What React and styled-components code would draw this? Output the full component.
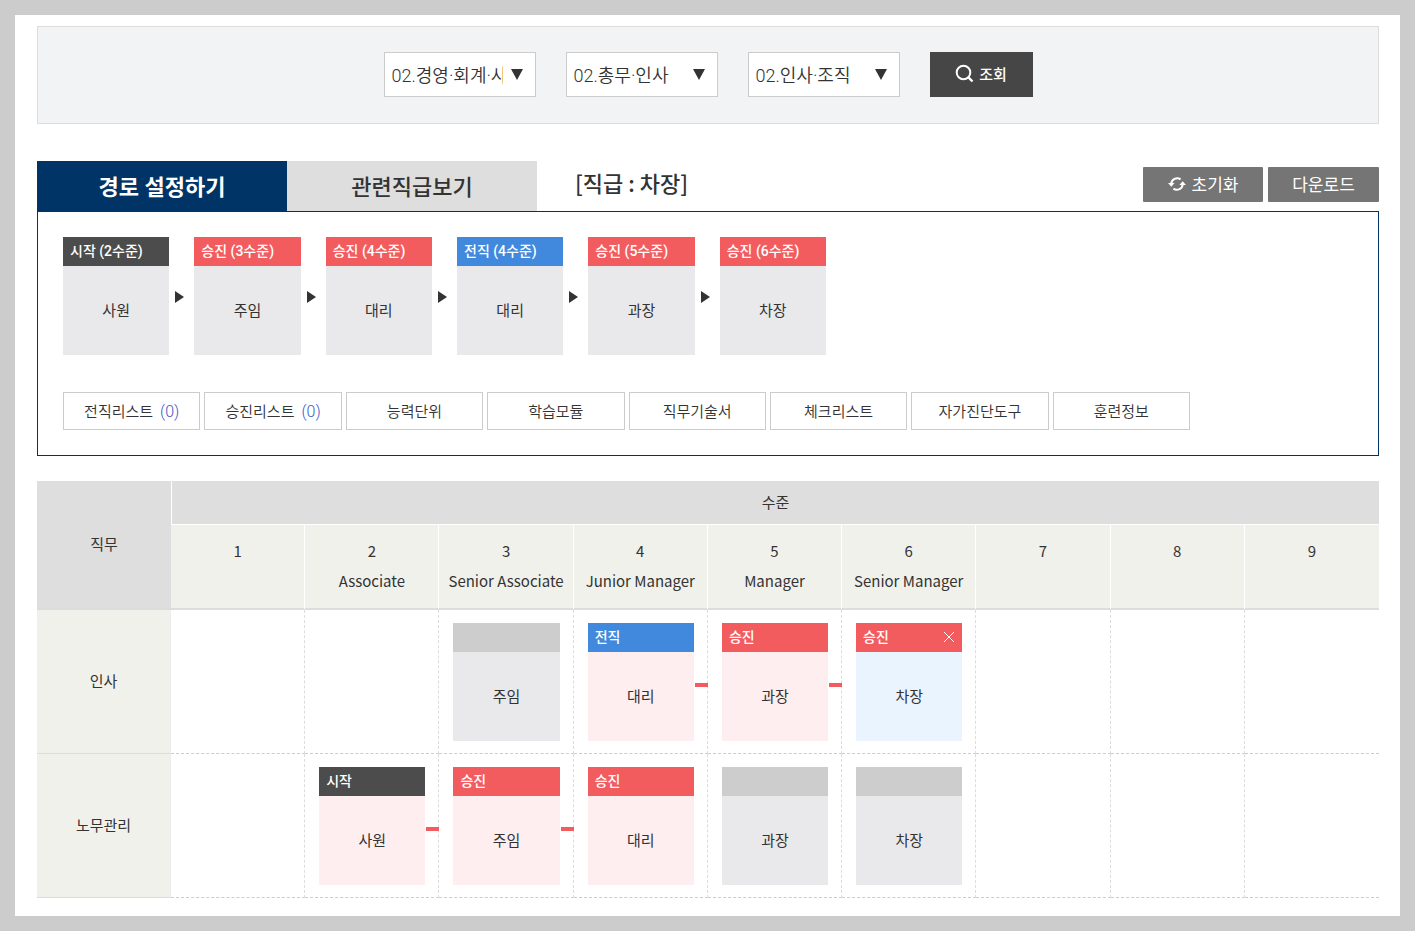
import React, { useState } from 'react';
import styled, { createGlobalStyle } from 'styled-components';

const GlobalStyle = createGlobalStyle`
  * {
    box-sizing: border-box;
  }

  body {
    margin: 0;
    background: #ccc;
    color: #333;
    font-family: Roboto, 'Noto Sans CJK KR', sans-serif;
    font-size: 15px;
  }

  button,
  select {
    font-family: inherit;
    color: inherit;
  }
`;

const kinds = {
  start: '#4c4c4c',
  promote: '#f35c5f',
  transfer: '#4189dd',
  none: '#cdcdcd',
};

const states = {
  idle: '#e9e9eb',
  path: '#ffeeef',
  current: '#e9f4ff',
};

const Sheet = styled.main`
  margin: 15px;
  padding: 11px 21px 18px 22px;
  background: #fff;
`;

const SearchBar = styled.form`
  display: flex;
  justify-content: center;
  align-items: center;
  gap: 30px;
  padding: 25px 0 26px;
  border: 1px solid #ddd;
  background: #f1f3f5;
`;

const SelectBox = styled.div`
  position: relative;
  width: 152px;

  &::after {
    content: '';
    position: absolute;
    top: 17px;
    right: 13px;
    border: 6px solid transparent;
    border-top: 11px solid #333;
    border-bottom: 0;
    pointer-events: none;
  }
`;

const Select = styled.select`
  display: block;
  width: 100%;
  height: 45px;
  padding: 2px 32px 0 7px;
  border: 1px solid #ccc;
  border-radius: 0;
  background: #fff;
  font-size: 18px;
  font-weight: 350;
  appearance: none;
`;

const SearchButton = styled.button`
  display: flex;
  justify-content: center;
  align-items: center;
  gap: 5px;
  width: 103px;
  height: 45px;
  padding: 0 0 2px;
  border: 0;
  background: #464646;
  color: #fff;
  font-size: 15px;
  font-weight: 500;
  cursor: pointer;
`;

const TabBar = styled.div`
  display: flex;
  align-items: center;
  margin-top: 37px;
`;

const Tab = styled.button`
  width: 250px;
  height: 50px;
  padding: 0 0 2px;
  border: 0;
  background: ${props => (props.$active ? '#003366' : '#dedede')};
  color: ${props => (props.$active ? '#fff' : '#333')};
  font-size: 22px;
  font-weight: ${props => (props.$active ? 700 : 500)};
  cursor: pointer;
`;

const Rank = styled.h2`
  flex: 1;
  margin: 0 0 8px 38px;
  font-family: 'Noto Sans CJK KR', sans-serif;
  font-size: 22px;
  line-height: 30px;
  font-weight: 500;
`;

const Tools = styled.div`
  display: flex;
  gap: 5px;
  padding-bottom: 3px;
`;

const ToolButton = styled.button`
  display: flex;
  justify-content: center;
  align-items: center;
  gap: 6px;
  min-width: ${props => (props.$wide ? '120px' : '111px')};
  height: 35px;
  padding: 0 0 2px;
  border: 0;
  border-radius: 1px;
  background: #757575;
  color: #fff;
  font-size: 17px;
  cursor: pointer;
`;

const Panel = styled.section`
  padding: 25px;
  border: 1px solid #003366;
`;

const Steps = styled.ol`
  display: grid;
  grid-template-columns: repeat(6, 1fr);
  gap: 25px;
  max-width: 763px;
  margin: 0;
  padding: 0;
  list-style: none;
`;

const Step = styled.li`
  position: relative;

  &:not(:last-child)::after {
    content: '';
    position: absolute;
    top: 54px;
    left: calc(100% + 6px);
    border: 6px solid transparent;
    border-left: 9px solid #333;
    border-right: 0;
  }
`;

const Card = styled.div`
  position: relative;
  background: ${props => states[props.$state]};

  &::after {
    content: '';
    display: ${props => (props.$linked ? 'block' : 'none')};
    position: absolute;
    top: 60px;
    left: calc(100% + 1px);
    width: 13px;
    height: 4px;
    background: #f35c5f;
  }
`;

const CardHead = styled.div`
  display: flex;
  justify-content: space-between;
  align-items: center;
  height: 29px;
  padding: 0 7px 3px;
  background: ${props => kinds[props.$kind]};
  color: #fff;
  font-size: 14px;
  font-weight: 500;
`;

const CardBody = styled.div`
  height: 89px;
  font-family: 'Noto Sans CJK KR', sans-serif;
  font-size: 15px;
  line-height: 88px;
  text-align: center;
`;

const CloseButton = styled.button`
  display: flex;
  padding: 2px 0 0;
  border: 0;
  background: none;
  color: #fff;
  cursor: pointer;
`;

const Links = styled.div`
  display: grid;
  grid-template-columns: repeat(8, 1fr);
  gap: 4px;
  max-width: 1127px;
  margin-top: 37px;
`;

const LinkButton = styled.button`
  height: 38px;
  padding: 0 0 2px;
  border: 1px solid #ccc;
  background: #fff;
  font-size: 15px;
  font-weight: 350;
  cursor: pointer;
`;

const Count = styled.span`
  margin-left: 7px;
  color: #3e57c4;
  font-size: 16px;
`;

const Table = styled.table`
  width: 100%;
  margin-top: 25px;
  border-spacing: 0;
  table-layout: fixed;
  font-family: 'Noto Sans CJK KR', sans-serif;
`;

const HeadCell = styled.th`
  height: 44px;
  padding: 0 0 3px;
  border-bottom: 1px solid #fff;
  border-left: 1px solid #fff;
  background: #dedede;
  font-weight: 400;
`;

const CornerCell = styled(HeadCell)`
  width: 134px;
  border-bottom: 2px solid #dcdcdc;
  border-left: 0;
`;

const LevelCell = styled.th`
  height: 85px;
  padding: 11px 0;
  border-right: 1px solid #fff;
  border-bottom: 2px solid #dcdcdc;
  background: #f0f1eb;
  font-size: 15px;
  line-height: 30px;
  font-weight: 400;
  vertical-align: top;
  white-space: nowrap;

  &:last-child {
    border-right: 0;
  }
`;

const LevelName = styled.span`
  display: block;
`;

const JobCell = styled.th`
  height: 144px;
  padding: 0 0 2px;
  border-right: 1px solid #ededed;
  border-bottom: 1px solid #dcdcdc;
  background: #f0f1eb;
  font-weight: 400;
`;

const Cell = styled.td`
  height: 144px;
  padding: 13px 13px 12px 14px;
  border-right: 1px dashed #dcdcdc;
  border-bottom: 1px dashed #ccc;

  &:last-child {
    border-right: 0;
  }
`;

const categories = [
  { label: '대분류', options: ['02.경영·회계·사무'] },
  { label: '중분류', options: ['02.총무·인사'] },
  { label: '소분류', options: ['02.인사·조직'] },
];

const steps = [
  { kind: 'start', label: '시작 (2수준)', name: '사원' },
  { kind: 'promote', label: '승진 (3수준)', name: '주임' },
  { kind: 'promote', label: '승진 (4수준)', name: '대리' },
  { kind: 'transfer', label: '전직 (4수준)', name: '대리' },
  { kind: 'promote', label: '승진 (5수준)', name: '과장' },
  { kind: 'promote', label: '승진 (6수준)', name: '차장' },
];

const links = [
  { label: '전직리스트', count: 0 },
  { label: '승진리스트', count: 0 },
  { label: '능력단위' },
  { label: '학습모듈' },
  { label: '직무기술서' },
  { label: '체크리스트' },
  { label: '자가진단도구' },
  { label: '훈련정보' },
];

const levels = [
  '',
  'Associate',
  'Senior Associate',
  'Junior Manager',
  'Manager',
  'Senior Manager',
  '',
  '',
  '',
];

const jobs = [
  {
    name: '인사',
    ranks: {
      3: { kind: 'none', state: 'idle', name: '주임' },
      4: { kind: 'transfer', label: '전직', state: 'path', name: '대리', linked: true },
      5: { kind: 'promote', label: '승진', state: 'path', name: '과장', linked: true },
      6: { kind: 'promote', label: '승진', state: 'current', name: '차장', closable: true },
    },
  },
  {
    name: '노무관리',
    ranks: {
      2: { kind: 'start', label: '시작', state: 'path', name: '사원', linked: true },
      3: { kind: 'promote', label: '승진', state: 'path', name: '주임', linked: true },
      4: { kind: 'promote', label: '승진', state: 'path', name: '대리' },
      5: { kind: 'none', state: 'idle', name: '과장' },
      6: { kind: 'none', state: 'idle', name: '차장' },
    },
  },
];

const SearchIcon = () => (
  <svg width="19" height="19" viewBox="0 0 19 19" fill="none" stroke="currentColor" strokeWidth="2" aria-hidden="true">
    <circle cx="8.5" cy="8.5" r="6.8" />
    <path d="M13.2 13.2l4.3 4.3" strokeWidth="2.4" />
  </svg>
);

const ResetIcon = () => (
  <svg width="18" height="16" viewBox="0 0 18 16" fill="none" stroke="currentColor" strokeWidth="2" aria-hidden="true">
    <path d="M3.3 8A5.8 5.8 0 0 1 12.6 3.4" />
    <path d="M14.7 8A5.8 5.8 0 0 1 5.4 12.6" />
    <path d="M0 7h6.6l-3.3 3.8zM18 9h-6.6l3.3-3.8z" fill="currentColor" stroke="none" />
  </svg>
);

const CloseIcon = () => (
  <svg width="12" height="12" viewBox="0 0 12 12" fill="none" stroke="currentColor" aria-hidden="true">
    <path d="M1 1l10 10M11 1L1 11" />
  </svg>
);

const RankCard = ({ kind, label, state, name, linked, closable }) => (
  <Card $state={state} $linked={linked}>
    <CardHead $kind={kind}>
      {label}
      {closable && (
        <CloseButton type="button" aria-label="닫기">
          <CloseIcon />
        </CloseButton>
      )}
    </CardHead>
    <CardBody>{name}</CardBody>
  </Card>
);

const App = () => {
  const [tab, setTab] = useState('path');

  return (
    <>
      <GlobalStyle />
      <Sheet>
        <SearchBar onSubmit={(e) => e.preventDefault()}>
          {categories.map((category) => (
            <SelectBox key={category.label}>
              <Select aria-label={category.label}>
                {category.options.map((option) => (
                  <option key={option}>{option}</option>
                ))}
              </Select>
            </SelectBox>
          ))}
          <SearchButton type="submit">
            <SearchIcon />
            조회
          </SearchButton>
        </SearchBar>

        <TabBar>
          <Tab type="button" $active={tab === 'path'} onClick={() => setTab('path')}>
            경로 설정하기
          </Tab>
          <Tab type="button" $active={tab === 'related'} onClick={() => setTab('related')}>
            관련직급보기
          </Tab>
          <Rank>[직급 : 차장]</Rank>
          <Tools>
            <ToolButton type="button" $wide>
              <ResetIcon />
              초기화
            </ToolButton>
            <ToolButton type="button">다운로드</ToolButton>
          </Tools>
        </TabBar>

        <Panel>
          <Steps>
            {steps.map((step) => (
              <Step key={step.label}>
                <RankCard {...step} state="idle" />
              </Step>
            ))}
          </Steps>
          <Links>
            {links.map((link) => (
              <LinkButton type="button" key={link.label}>
                {link.label}
                {link.count !== undefined && <Count>({link.count})</Count>}
              </LinkButton>
            ))}
          </Links>
        </Panel>

        <Table>
          <thead>
            <tr>
              <CornerCell rowSpan={2} scope="col">직무</CornerCell>
              <HeadCell colSpan={9} scope="colgroup">수준</HeadCell>
            </tr>
            <tr>
              {levels.map((level, i) => (
                <LevelCell key={i} scope="col">
                  {i + 1}
                  <LevelName>{level}</LevelName>
                </LevelCell>
              ))}
            </tr>
          </thead>
          <tbody>
            {jobs.map((job) => (
              <tr key={job.name}>
                <JobCell scope="row">{job.name}</JobCell>
                {levels.map((level, i) => (
                  <Cell key={i}>
                    {job.ranks[i + 1] && <RankCard {...job.ranks[i + 1]} />}
                  </Cell>
                ))}
              </tr>
            ))}
          </tbody>
        </Table>
      </Sheet>
    </>
  );
};

export default App;
